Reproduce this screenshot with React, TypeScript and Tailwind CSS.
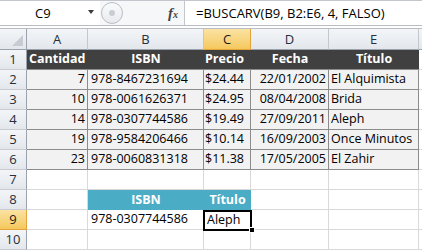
import React from 'react'

const cols = [61, 116, 47, 78, 90]
const letters = ['A', 'B', 'C', 'D', 'E']

const libros = [
  { cant: 7, isbn: '978-8467231694', precio: '$24.44', fecha: '22/01/2002', titulo: 'El Alquimista' },
  { cant: 10, isbn: '978-0061626371', precio: '$24.95', fecha: '08/04/2008', titulo: 'Brida' },
  { cant: 14, isbn: '978-0307744586', precio: '$19.49', fecha: '27/09/2011', titulo: 'Aleph' },
  { cant: 19, isbn: '978-9584206466', precio: '$10.14', fecha: '16/09/2003', titulo: 'Once Minutos' },
  { cant: 23, isbn: '978-0060831318', precio: '$11.38', fecha: '17/05/2005', titulo: 'El Zahir' },
]

function RowHead({ n, active }: { n: number; active?: boolean }) {
  return (
    <div
      className={
        'w-[27px] shrink-0 flex items-center justify-center border-r border-b text-[13px] ' +
        (active
          ? 'bg-gradient-to-b from-[#fbe3a2] to-[#f5c85c] border-r-[#e2a43a] border-b-[#e2a43a] text-[#1b1b1b]'
          : 'bg-gradient-to-b from-[#f3f5f8] to-[#e3e7ec] border-r-[#9aa3ad] border-b-[#c8ccd2] text-[#262f3a]')
      }
    >
      {n}
    </div>
  )
}

function Empty({ w }: { w: number }) {
  return <div className="shrink-0 border-r border-b border-[#d9d9d9]" style={{ width: w }} />
}

export default function App() {
  return (
    <div className="w-[422px] h-[250px] overflow-hidden bg-white text-black font-['Open_Sans',sans-serif] text-[12.5px] leading-none">
      {/* barra de fórmulas */}
      <div className="h-[25px] flex border-t border-[#c3c7cd] bg-white">
        <div className="w-[100px] shrink-0 flex items-center relative">
          <span className="ml-[35px] text-[13px]">C9</span>
          <span className="absolute left-[88px] top-[9px] w-0 h-0 border-l-[3.5px] border-r-[3.5px] border-t-[4px] border-l-transparent border-r-transparent border-t-[#3a3a3a]" />
        </div>
        <div className="w-[84px] shrink-0 flex items-center relative bg-[#f6f7f9]">
          <div className="absolute left-[1px] top-[1px] w-[22px] h-[22px] rounded-full border border-[#b9bec6] bg-gradient-to-b from-[#fafbfc] to-[#e8eaee] flex items-center justify-center">
            <div className="w-[6px] h-[6px] rounded-full bg-[#c9cdd3]" />
          </div>
          <span className="ml-[68px] font-['Liberation_Serif',serif] italic font-bold text-[15px] text-[#444]">
            f<span className="text-[10px] align-baseline">x</span>
          </span>
        </div>
        <div className="flex-1 flex items-center border-l border-[#c3c7cd] pl-[11px] text-[13px]">
          =BUSCARV(B9, B2:E6, 4, FALSO)
        </div>
      </div>
      <div className="h-[4px] border-t border-b border-[#b8bcc3] bg-white" />

      {/* encabezados de columnas */}
      <div className="h-[21px] flex">
        <div className="w-[27px] shrink-0 relative border-r border-b border-r-[#9aa3ad] border-b-[#9aa3ad] bg-gradient-to-b from-[#f3f5f8] to-[#e3e7ec]">
          <span className="absolute right-[3px] bottom-[3px] w-0 h-0" style={{ borderBottom: '11px solid #c7ccd3', borderLeft: '11px solid transparent' }} />
        </div>
        {cols.map((w, i) => (
          <div
            key={letters[i]}
            className={
              'shrink-0 flex items-center justify-center border-r border-b text-[13px] ' +
              (i === 2
                ? 'bg-gradient-to-b from-[#fbe3a2] to-[#f5c85c] border-r-[#e2a43a] border-b-[#e2a43a] text-[#1b1b1b]'
                : 'bg-gradient-to-b from-[#f3f5f8] to-[#e3e7ec] border-r-[#c3c8cf] border-b-[#9aa3ad] text-[#262f3a]')
            }
            style={{ width: w }}
          >
            {letters[i]}
          </div>
        ))}
        <div className="flex-1 border-b border-[#9aa3ad] bg-gradient-to-b from-[#f3f5f8] to-[#e3e7ec]" />
      </div>

      {/* fila 1: encabezado de la tabla */}
      <div className="h-[20px] flex">
        <RowHead n={1} />
        <div className="flex bg-[#404040] text-white font-bold border-b border-[#8c8c8c]">
          <div className="w-[61px] flex items-center pl-[2px]">Cantidad</div>
          <div className="w-[116px] flex items-center justify-center">ISBN</div>
          <div className="w-[47px] flex items-center pl-[1px]">Precio</div>
          <div className="w-[78px] flex items-center justify-center">Fecha</div>
          <div className="w-[90px] flex items-center justify-center">Título</div>
        </div>
        <div className="flex-1 border-b border-[#d9d9d9]" />
      </div>

      {/* filas de datos */}
      {libros.map((l, i) => (
        <div key={l.isbn} className="h-[20px] flex">
          <RowHead n={i + 2} />
          <div className="flex bg-[#f2f2f2] border-b border-[#8c8c8c]">
            <div className="w-[61px] flex items-center justify-end pr-[2px] border-r border-[#8c8c8c]">{l.cant}</div>
            <div className="w-[116px] flex items-center pl-[3px] border-r border-[#8c8c8c]">{l.isbn}</div>
            <div className="w-[47px] flex items-center pl-[1px] border-r border-[#8c8c8c]">{l.precio}</div>
            <div className="w-[78px] flex items-center justify-end pr-[2px] border-r border-[#8c8c8c]">{l.fecha}</div>
            <div className="w-[90px] flex items-center pl-[2px] border-r border-[#8c8c8c]">{l.titulo}</div>
          </div>
          <div className="flex-1 border-b border-[#d9d9d9]" />
        </div>
      ))}

      {/* fila 7 */}
      <div className="h-[20px] flex">
        <RowHead n={7} />
        {cols.map((w, i) => (
          <Empty key={i} w={w} />
        ))}
        <div className="flex-1 border-b border-[#d9d9d9]" />
      </div>

      {/* fila 8 */}
      <div className="h-[20px] flex">
        <RowHead n={8} />
        <Empty w={61} />
        <div className="w-[163px] shrink-0 flex bg-[#4bacc6] text-white font-bold">
          <div className="w-[116px] flex items-center justify-center">ISBN</div>
          <div className="w-[47px] flex items-center justify-center">Título</div>
        </div>
        <Empty w={78} />
        <Empty w={90} />
        <div className="flex-1 border-b border-[#d9d9d9]" />
      </div>

      {/* fila 9 */}
      <div className="h-[20px] flex">
        <RowHead n={9} active />
        <Empty w={61} />
        <div className="w-[116px] shrink-0 flex items-center pl-[3px] border-r border-b border-[#d9d9d9]">978-0307744586</div>
        <div className="w-[47px] shrink-0 relative z-10 border-t border-[#c0504d]">
          <div className="absolute left-[-1px] top-[-1px] w-[49px] h-[21px] border-2 border-black flex items-center pl-[2px]">
            Aleph
          </div>
          <div className="absolute right-[-4px] bottom-[-3px] w-[6px] h-[6px] bg-black border border-white" />
        </div>
        <Empty w={78} />
        <Empty w={90} />
        <div className="flex-1 border-b border-[#d9d9d9]" />
      </div>

      {/* fila 10 */}
      <div className="h-[20px] flex">
        <RowHead n={10} />
        {cols.map((w, i) => (
          <Empty key={i} w={w} />
        ))}
        <div className="flex-1 border-b border-[#d9d9d9]" />
      </div>
    </div>
  )
}
